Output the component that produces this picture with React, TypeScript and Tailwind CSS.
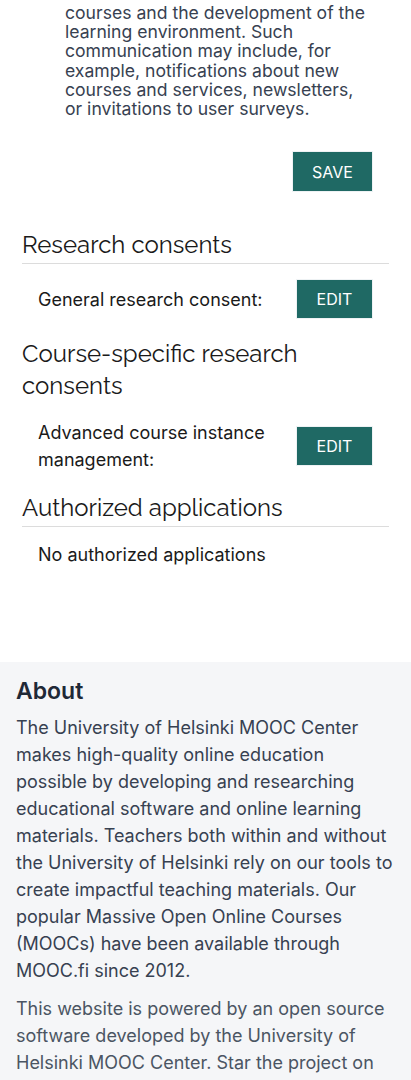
import React from 'react';

const Btn: React.FC<{ label: string; tall?: boolean }> = ({ label, tall }) => (
  <button
    className={`shrink-0 border border-[#eef2f4] bg-[#1f6964] text-white text-[16px] leading-none ${tall ? 'w-[81px] h-[41px]' : 'w-[77px] h-[40px]'}`}
  >
    {label}
  </button>
);

const Heading: React.FC<{ children: React.ReactNode; line?: boolean }> = ({ children, line }) => (
  <h2
    className={`font-['Raleway','Lato',sans-serif] text-[24px] leading-[32px] text-[#1a1a1a] ${line ? 'border-b border-[#dcdcdc] pb-[2px]' : ''}`}
  >
    {children}
  </h2>
);

export default function App() {
  return (
    <div className="min-h-screen bg-white font-['Inter',sans-serif]">
      {/* consent settings */}
      <div className="px-[22px]">
        <p className="ml-[43px] w-[306px] pt-[3px] text-[17.6px] leading-[19.2px] text-[#374151]">
          courses and the development of the learning environment. Such communication may include, for
          example, notifications about new courses and services, newsletters, or invitations to user surveys.
        </p>
        <div className="mt-[33px] flex justify-end pr-[16px]">
          <Btn label="SAVE" tall />
        </div>

        <div className="mt-[37px]">
          <Heading line>Research consents</Heading>
        </div>
        <div className="mt-[15px] flex items-center justify-between pl-[16px] pr-[16px]">
          <span className="text-[18px] leading-[27px] text-[#1a1a1a]">General research consent:</span>
          <Btn label="EDIT" />
        </div>

        <div className="mt-[19px] w-[280px]">
          <Heading>Course-specific research consents</Heading>
        </div>
        <div className="mt-[17px] flex items-center justify-between pl-[16px] pr-[16px]">
          <span className="w-[250px] text-[18px] leading-[27px] text-[#1a1a1a]">
            Advanced course instance management:
          </span>
          <Btn label="EDIT" />
        </div>

        <div className="mt-[19px]">
          <Heading line>Authorized applications</Heading>
        </div>
        <p className="mt-[14px] pl-[16px] text-[18px] leading-[27px] text-[#1a1a1a]">No authorized applications</p>
      </div>

      {/* footer */}
      <footer className="mt-[94px] bg-[#f5f6f8] px-[16px] pt-[13px] pb-[40px]">
        <h3 className="text-[23px] leading-[32px] font-semibold text-[#1f2937]">About</h3>
        <p className="mt-[7px] text-[18px] leading-[27px] text-[#374151]">
          The University of Helsinki MOOC Center makes high-quality online education possible by developing and
          researching educational software and online learning materials. Teachers both within and without the
          University of Helsinki rely on our tools to create impactful teaching materials. Our popular Massive Open
          Online Courses (MOOCs) have been available through MOOC.fi since 2012.
        </p>
        <p className="mt-[11px] text-[18px] leading-[27px] text-[#4b5563]">
          This website is powered by an open source software developed by the University of Helsinki MOOC Center.
          Star the project on GitHub.
        </p>
      </footer>
    </div>
  );
}
